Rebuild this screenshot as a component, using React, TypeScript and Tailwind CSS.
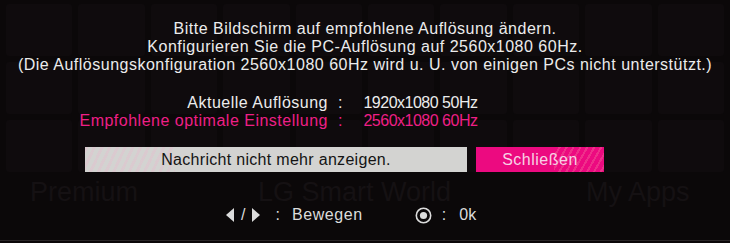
import React from "react";

const FONT = { fontFamily: '"Liberation Sans", Arial, sans-serif' };

function Tiles() {
  // faint launcher tiles behind the dialog
  const cells = Array.from({ length: 30 }, (_, i) => i);
  return (
    <div className="absolute inset-0 pointer-events-none">
      <div className="grid grid-cols-10 gap-[6px] px-[6px] pt-[4px]">
        {cells.map((i) => (
          <div key={i} className="h-[52px] rounded-[3px] bg-[#0f0b0d]" />
        ))}
      </div>
      <div className="absolute left-0 right-0 top-[179px] flex text-[27px] leading-[26px] text-[#151113]" style={FONT}>
        <span className="ml-[30px]">Premium</span>
        <span className="ml-[120px]">LG Smart World</span>
        <span className="ml-[135px]">My Apps</span>
      </div>
      <div className="absolute left-0 right-0 bottom-[2px] h-[1px] bg-[#2a2628]" />
    </div>
  );
}

function Triangle({ dir }: { dir: "left" | "right" }) {
  return (
    <svg width="8" height="14" viewBox="0 0 8 14">
      {dir === "left" ? (
        <polygon points="8,0 8,14 0,7" fill="#dcdcdc" />
      ) : (
        <polygon points="0,0 0,14 8,7" fill="#dcdcdc" />
      )}
    </svg>
  );
}

export default function App() {
  return (
    <div className="relative w-[730px] h-[243px] overflow-hidden bg-[#0b0809]" style={FONT}>
      <Tiles />
      <div className="relative flex flex-col">
        <div className="pt-[20px] flex flex-col items-center text-[16px] leading-[18px] text-[#ececec] tracking-[0.5px]">
          <p>Bitte Bildschirm auf empfohlene Auflösung ändern.</p>
          <p>Konfigurieren Sie die PC-Auflösung auf 2560x1080 60Hz.</p>
          <p>(Die Auflösungskonfiguration 2560x1080 60Hz wird u. U. von einigen PCs nicht unterstützt.)</p>
        </div>

        <div className="mt-[20px] flex flex-col leading-[18px] text-[16px]">
          <div className="flex text-[#ececec]">
            <span className="w-[328px] text-right tracking-[0.5px]">Aktuelle Auflösung</span>
            <span className="ml-[10px]">:</span>
            <span className="ml-[21px] tracking-[-0.5px]">1920x1080 50Hz</span>
          </div>
          <div className="flex text-[#ee1f86]">
            <span className="w-[328px] text-right tracking-[0.5px]">Empfohlene optimale Einstellung</span>
            <span className="ml-[10px]">:</span>
            <span className="ml-[21px] tracking-[-0.5px]">2560x1080 60Hz</span>
          </div>
        </div>

        <div className="mt-[17px] ml-[85px] flex gap-[9px] h-[25px]">
          <div className="relative w-[382px] bg-[#d3d3d1] flex items-center justify-center text-[16px] tracking-[0.3px] text-[#141414] overflow-hidden">
            <div className="absolute left-0 top-0 bottom-0 w-[90px] bg-[repeating-linear-gradient(115deg,#dcc8cf_0px,#dcc8cf_3px,#d3d3d1_3px,#d3d3d1_7px)] opacity-80" />
            <span className="relative">Nachricht nicht mehr anzeigen.</span>
          </div>
          <div className="relative w-[128px] bg-[#ec0a80] flex items-center justify-center text-[16px] tracking-[0.5px] text-[#f7d2e5] overflow-hidden">
            <div className="absolute right-0 top-0 bottom-0 w-[50px] bg-[repeating-linear-gradient(120deg,#ec0a80_0px,#ec0a80_4px,#f0408f_4px,#f0408f_6px)] opacity-70" />
            <span className="relative">Schließen</span>
          </div>
        </div>

        <div className="mt-[34px] flex items-center h-[18px] text-[16px] text-[#dcdcdc]">
          <span className="ml-[226px] flex items-center">
            <Triangle dir="left" />
            <span className="mx-[7px]">/</span>
            <Triangle dir="right" />
          </span>
          <span className="ml-[15px]">:</span>
          <span className="ml-[12px] tracking-[0.6px]">Bewegen</span>
          <span className="ml-[52px] flex items-center">
            <svg width="17" height="17" viewBox="0 0 17 17">
              <circle cx="8.5" cy="8.5" r="7.2" fill="none" stroke="#dcdcdc" strokeWidth="1.6" />
              <circle cx="8.5" cy="8.5" r="3.6" fill="#dcdcdc" />
            </svg>
          </span>
          <span className="ml-[10px]">:</span>
          <span className="ml-[13px]">0k</span>
        </div>
      </div>
    </div>
  );
}
